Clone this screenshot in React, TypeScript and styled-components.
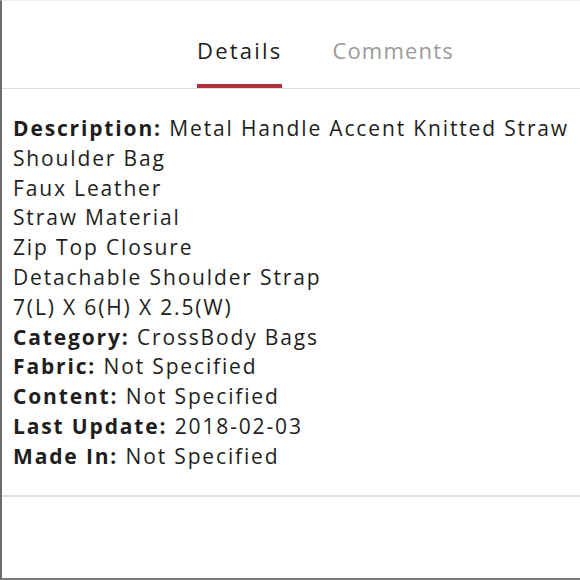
import React from "react";
import styled, { createGlobalStyle } from "styled-components";

const Global = createGlobalStyle`
  html, body { margin: 0; padding: 0; background: #fff; }
  body { font-family: "Open Sans", "Noto Sans", sans-serif; }
`;

const Frame = styled.div`
  box-sizing: border-box;
  width: 580px;
  height: 580px;
  border-left: 2px solid #6e6e6e;
  border-bottom: 2px solid #7a7a7a;
  border-top: 1px solid #eeeeee;
  background: #fff;
  display: flex;
  flex-direction: column;
`;

const TabBar = styled.div`
  display: flex;
  align-items: flex-end;
  gap: 50px;
  height: 87px;
  padding-left: 195px;
  border-bottom: 1px solid #dedede;
`;

const Tab = styled.div<{ $active?: boolean }>`
  font-size: 22px;
  line-height: 30px;
  letter-spacing: ${(p) => (p.$active ? "2.2px" : "1.2px")};
  color: ${(p) => (p.$active ? "#1c1c1c" : "#9a9a9a")};
  padding: 0 0 19px 0;
  border-bottom: 4px solid ${(p) => (p.$active ? "#b3303a" : "transparent")};
`;

const Body = styled.div`
  padding: 25px 4px 23px 11px;
  border-bottom: 2px solid #e2e2e2;
  font-size: 21px;
  line-height: 29.8px;
  letter-spacing: 1.85px;
  color: #1e1e1e;
`;

const Line = styled.div``;

const Label = styled.span`
  font-weight: 700;
`;

const rows: Array<[string | null, string]> = [
  ["Description:", "Metal Handle Accent Knitted Straw Shoulder Bag"],
  [null, "Faux Leather"],
  [null, "Straw Material"],
  [null, "Zip Top Closure"],
  [null, "Detachable Shoulder Strap"],
  [null, "7(L) X 6(H) X 2.5(W)"],
  ["Category:", "CrossBody Bags"],
  ["Fabric:", "Not Specified"],
  ["Content:", "Not Specified"],
  ["Last Update:", "2018-02-03"],
  ["Made In:", "Not Specified"],
];

export default function App() {
  return (
    <>
      <Global />
      <Frame>
        <TabBar>
          <Tab $active>Details</Tab>
          <Tab>Comments</Tab>
        </TabBar>
        <Body>
          {rows.map(([label, value], i) => (
            <Line key={i}>
              {label && <Label>{label}</Label>}
              {label ? " " : ""}
              {value}
            </Line>
          ))}
        </Body>
      </Frame>
    </>
  );
}
